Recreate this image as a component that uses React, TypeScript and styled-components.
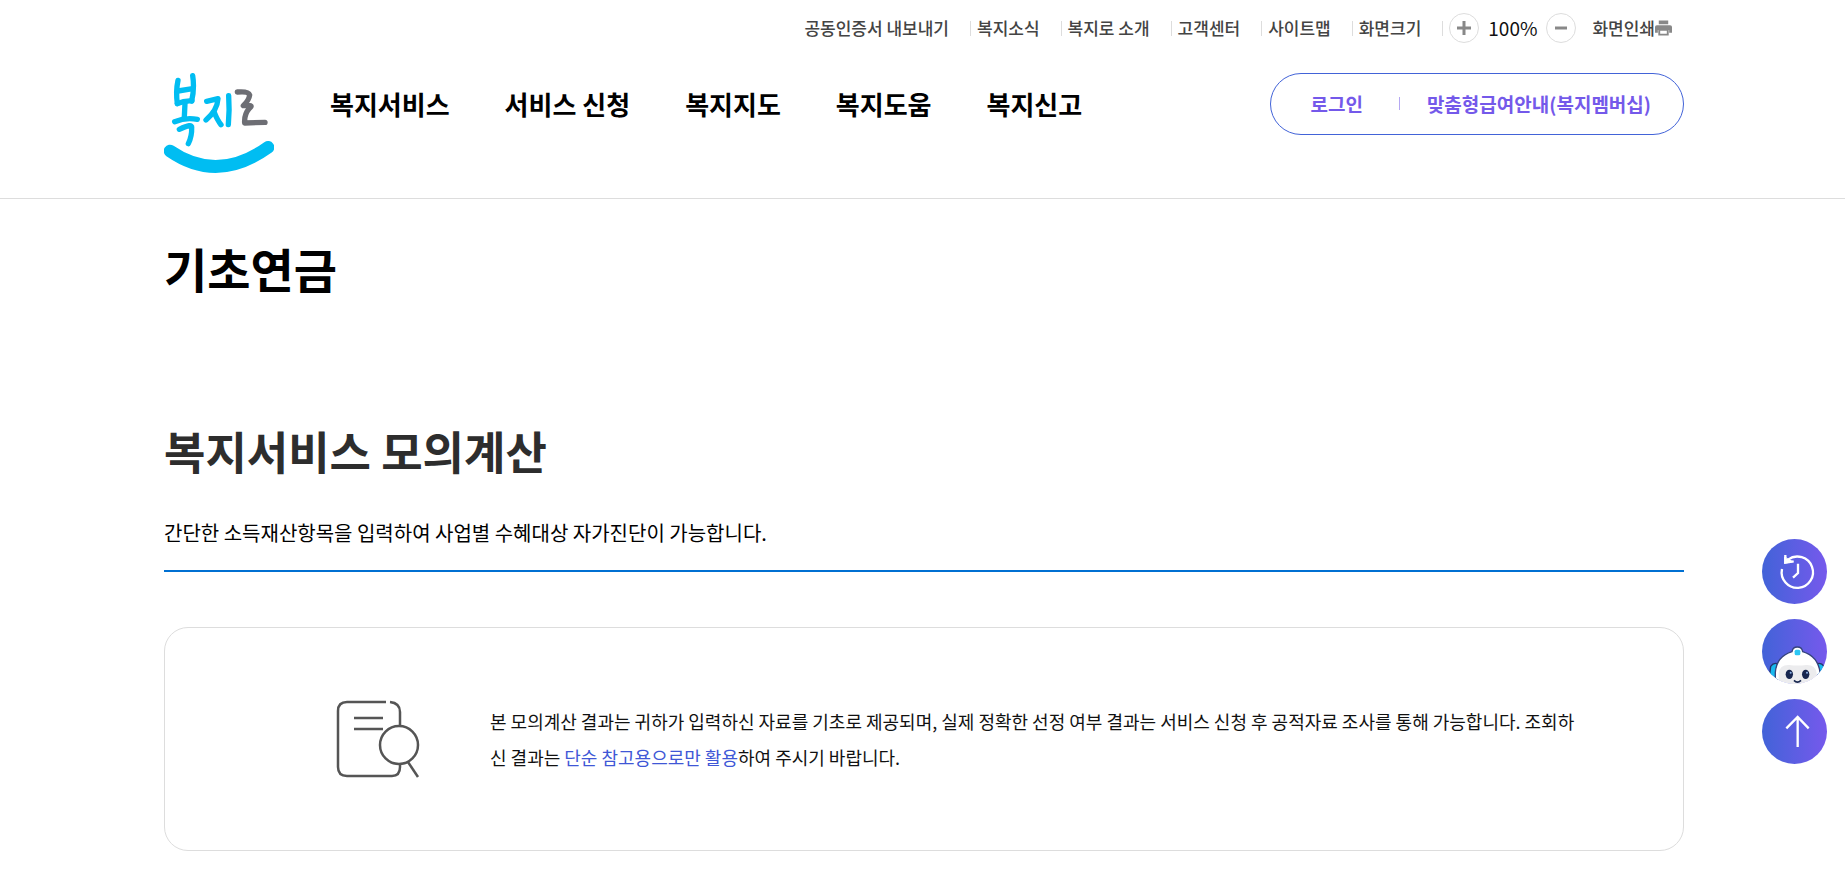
import React from 'react';
import styled, { createGlobalStyle } from 'styled-components';

const GlobalStyle = createGlobalStyle`
  *, *::before, *::after { box-sizing: border-box; }
  body {
    margin: 0;
    background: #fff;
    color: #000;
    font-family: "Noto Sans CJK KR", "Noto Sans", sans-serif;
  }
  h1, h2, p, ul { margin: 0; padding: 0; }
  ul { list-style: none; }
  a { color: inherit; text-decoration: none; }
  button { padding: 0; border: 0; font: inherit; cursor: pointer; }
`;

const Container = styled.div`
  max-width: 1523px;
  margin: 0 auto;
  padding-left: 3px;
`;

const Header = styled.header`
  border-bottom: 1px solid #ddd;
`;

const UtilityBar = styled.div`
  display: flex;
  justify-content: flex-end;
  align-items: center;
  height: 56px;
  padding-right: 12px;
  font-size: 17px;
  line-height: 24px;
  color: #444;
  font-weight: 500;
`;

const UtilityList = styled.ul`
  display: flex;
  align-items: center;
`;

const UtilityItem = styled.li`
  display: flex;
  align-items: center;
  &::after {
    content: '';
    width: 1px;
    height: 15px;
    margin: 0 6px 0 21px;
    background: #ddd;
  }
`;

const ZoomGroup = styled.div`
  display: flex;
  align-items: center;
  gap: 9px;
  margin-right: 16px;
`;

const ZoomButton = styled.button`
  display: grid;
  place-items: center;
  width: 30px;
  height: 30px;
  border: 1px solid #ddd;
  border-radius: 50%;
  background: #fff;
`;

const ZoomValue = styled.span`
  font-size: 19px;
  font-weight: 400;
  color: #111;
`;

const PrintLink = styled.a`
  display: flex;
  align-items: center;
`;

const MainBar = styled.div`
  display: flex;
  align-items: flex-start;
  padding: 17px 0 25px;
`;

const LogoLink = styled.a`
  display: block;
  width: 110px;
  height: 100px;
`;

const Nav = styled.nav`
  flex: 1;
  padding: 12px 0 0 56px;
`;

const NavList = styled.ul`
  display: flex;
  gap: 55px;
  font-size: 26px;
  line-height: 38px;
  font-weight: 700;
`;

const MemberBox = styled.div`
  display: flex;
  align-items: center;
  height: 62px;
  padding: 0 32px 2px 39px;
  border: 1px solid #4263d8;
  border-radius: 31px;
  color: #7459ea;
  font-size: 19px;
  font-weight: 700;
`;

const MemberDivider = styled.span`
  width: 1px;
  height: 13px;
  margin: 0 27px 0 36px;
  background: #b5a8f3;
`;

const PageTitle = styled.h1`
  padding: 34px 0 0;
  font-size: 47px;
  line-height: 70px;
  font-weight: 700;
`;

const SectionTitle = styled.h2`
  padding: 116px 0 0;
  font-size: 45px;
  line-height: 64px;
  font-weight: 700;
  color: #2d2d2d;
`;

const Lead = styled.p`
  padding: 35px 0 22px;
  border-bottom: 2px solid #0070d2;
  font-size: 20px;
  line-height: 30px;
`;

const Notice = styled.section`
  display: flex;
  align-items: center;
  gap: 70px;
  margin: 55px 0 19px;
  padding: 72px 106px 72px 171px;
  border: 1px solid #ddd;
  border-radius: 24px;
`;

const NoticeIcon = styled.svg`
  flex: none;
  width: 84px;
  height: 78px;
`;

const NoticeText = styled.p`
  font-size: 18px;
  line-height: 36px;
  color: #111;
  em { font-style: normal; color: #4057d6; }
`;

const QuickMenu = styled.aside`
  position: fixed;
  right: 18px;
  bottom: 106px;
  display: flex;
  flex-direction: column;
  gap: 15px;
`;

const QuickButton = styled.button`
  width: 65px;
  height: 65px;
  border-radius: 50%;
  overflow: hidden;
  background: linear-gradient(90deg, #4263d8, #7659ec);
  svg { display: block; }
`;

const Logo = () => (
  <svg width="110" height="100" viewBox="0 0 330 300" fill="none" strokeLinecap="round" strokeLinejoin="round">
    <g stroke="#00bdf2" strokeWidth="16">
      <path d="M42 22 Q35 55 40 92" />
      <path d="M86 8 Q92 45 83 84" />
      <path d="M42 54 L86 47" />
      <path d="M40 92 Q62 82 84 84" />
      <path d="M63 90 L61 132" />
      <path d="M32 146 Q66 132 100 139" />
      <path d="M46 169 Q86 150 83 164 Q84 190 73 212" />
      <path d="M128 85 L162 77 Q160 112 126 141" />
      <path d="M150 116 Q160 142 171 155" />
      <path d="M194 68 Q197 110 193 155" />
    </g>
    <path d="M220 57 Q253 54 257 66 Q255 82 238 98 Q272 94 256 106 Q240 125 242 150 L303 148" stroke="#6d6e74" strokeWidth="16" />
    <path d="M18 234 Q160 332 312 223" stroke="#00bdf2" strokeWidth="38" />
  </svg>
);

const PrinterIcon = () => (
  <svg width="17" height="16" viewBox="0 0 18 16" fill="#888">
    <path d="M4 0h10v4H4z M2 5h14q2 0 2 2v6h-3v-3H3v3H0V7q0-2 2-2z" />
    <path d="M4.500 10h9v5h-9z" fill="#fff" stroke="#888" strokeWidth="2" />
  </svg>
);

const HistoryIcon = () => (
  <svg width="65" height="65" viewBox="0 0 195 195" fill="none" stroke="#fff" strokeWidth="7">
    <path d="M78 62 A47 47 0 1 1 60 90" />
    <path d="M70 48 V71 L95 67" />
    <path d="M70 54 V70 L86 67 L74 60" fill="#fff" />
    <path d="M108 74 V102 L93 116" />
  </svg>
);

const BotIcon = () => (
  <svg width="65" height="65" viewBox="0 0 195 195">
    <path d="M26 142 Q34 130 46 134 V190 H20z M186 142 Q178 130 166 134 V190 H190z" fill="#18b9ee" stroke="#26346a" strokeWidth="4" />
    <path d="M40 200 V160 Q44 112 90 98 Q92 84 106 84 Q120 84 122 98 Q168 112 174 160 V200z" fill="#fff" stroke="#36447c" strokeWidth="4" />
    <path d="M50 200 V162 Q54 136 82 138 Q106 141 132 138 Q160 136 164 162 V200z" fill="#ececee" />
    <rect x="98" y="92" width="17" height="17" rx="5" fill="#2cc6f4" />
    <ellipse cx="82" cy="166" rx="11" ry="14" fill="#17264f" />
    <ellipse cx="131" cy="166" rx="11" ry="14" fill="#17264f" />
    <circle cx="86" cy="161" r="3" fill="#8fb4e8" />
    <circle cx="135" cy="161" r="3" fill="#8fb4e8" />
    <path d="M96 184 Q106 195 117 184" fill="none" stroke="#17264f" strokeWidth="5" />
  </svg>
);

const TopIcon = () => (
  <svg width="65" height="65" viewBox="0 0 195 195" fill="none" stroke="#fff" strokeWidth="7">
    <path d="M107 144 V54 M73 88 L107 54 L140 88" />
  </svg>
);

const utilities = ['공동인증서 내보내기', '복지소식', '복지로 소개', '고객센터', '사이트맵', '화면크기'];
const menus = ['복지서비스', '서비스 신청', '복지지도', '복지도움', '복지신고'];

export default function App() {
  return (
    <>
      <GlobalStyle />
      <Header>
        <Container>
          <UtilityBar>
            <UtilityList>
              {utilities.map((label) => (
                <UtilityItem key={label}><a href="#">{label}</a></UtilityItem>
              ))}
            </UtilityList>
            <ZoomGroup>
              <ZoomButton type="button" aria-label="확대">
                <svg width="14" height="14" stroke="#888" strokeWidth="3"><path d="M7 0v14M0 7h14" /></svg>
              </ZoomButton>
              <ZoomValue>100%</ZoomValue>
              <ZoomButton type="button" aria-label="축소">
                <svg width="14" height="14" stroke="#888" strokeWidth="3"><path d="M1 7h12" /></svg>
              </ZoomButton>
            </ZoomGroup>
            <PrintLink href="#">화면인쇄<PrinterIcon /></PrintLink>
          </UtilityBar>
          <MainBar>
            <LogoLink href="#" aria-label="복지로"><Logo /></LogoLink>
            <Nav>
              <NavList>
                {menus.map((label) => (
                  <li key={label}><a href="#">{label}</a></li>
                ))}
              </NavList>
            </Nav>
            <MemberBox>
              <a href="#">로그인</a>
              <MemberDivider />
              <a href="#">맞춤형급여안내(복지멤버십)</a>
            </MemberBox>
          </MainBar>
        </Container>
      </Header>
      <Container as="main">
        <PageTitle>기초연금</PageTitle>
        <SectionTitle>복지서비스 모의계산</SectionTitle>
        <Lead>간단한 소득재산항목을 입력하여 사업별 수혜대상 자가진단이 가능합니다.</Lead>
        <Notice>
          <NoticeIcon viewBox="0 0 84 78" fill="none" stroke="#555" strokeWidth="2.500" aria-hidden="true">
            <path d="M50 2 H11 Q2 2 2 11 V67 Q2 76 11 76 H56 Q64 76 64 67 V64" />
            <path d="M54 2 Q64 3 64 12 V26" />
            <path d="M18 18 H47 M18 29 H47" />
            <ellipse cx="63" cy="45" rx="19" ry="19" />
            <path d="M72 62 L82 77" />
          </NoticeIcon>
          <NoticeText>
            본 모의계산 결과는 귀하가 입력하신 자료를 기초로 제공되며, 실제 정확한 선정 여부 결과는 서비스 신청 후 공적자료 조사를 통해 가능합니다. 조회하신 결과는 <em>단순 참고용으로만 활용</em>하여 주시기 바랍니다.
          </NoticeText>
        </Notice>
      </Container>
      <QuickMenu>
        <QuickButton type="button" aria-label="최근 이용 내역"><HistoryIcon /></QuickButton>
        <QuickButton type="button" aria-label="챗봇"><BotIcon /></QuickButton>
        <QuickButton type="button" aria-label="맨 위로"><TopIcon /></QuickButton>
      </QuickMenu>
    </>
  );
}
